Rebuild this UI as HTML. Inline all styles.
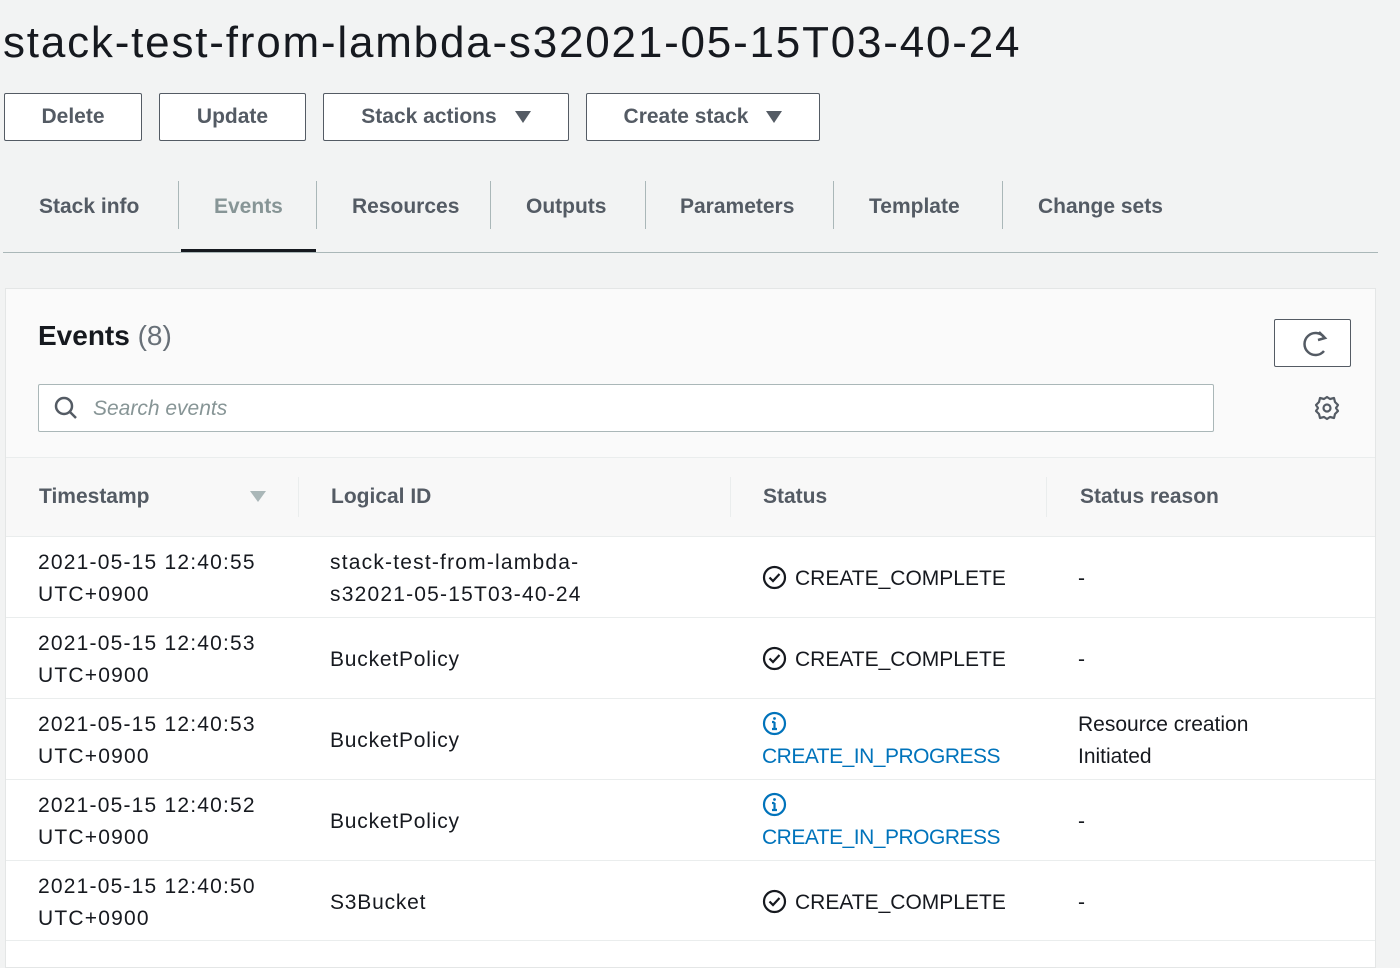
<!DOCTYPE html>
<html><head><meta charset="utf-8"><style>
*{margin:0;padding:0;box-sizing:border-box}
body{width:1400px;height:951px;overflow:hidden;background:#f2f3f3;font-family:"Liberation Sans",sans-serif;color:#16191f;position:relative}
.a{position:absolute;white-space:nowrap}
h1{position:absolute;left:3px;top:18px;font-size:44px;font-weight:400;color:#16191f;letter-spacing:1.8px}
.btn{position:absolute;top:93px;height:48px;border:1px solid #545b64;border-radius:2px;background:#fff;color:#545b64;font-weight:700;font-size:21px;display:flex;align-items:center;justify-content:center;gap:18px}
.tri{width:0;height:0;border-left:8px solid transparent;border-right:8px solid transparent;border-top:12px solid #545b64}
.tab{position:absolute;top:195px;font-size:21px;font-weight:700;color:#545b64}
.sep{position:absolute;top:181px;width:1px;height:48px;background:#aab7b8}
.panel{position:absolute;left:5px;top:288px;width:1371px;height:680px;background:#fff;border:1px solid #e4e6e6}
.cell{position:absolute;font-size:21px;line-height:32px;color:#16191f}
.ls{letter-spacing:1.2px}
.hd{position:absolute;top:485px;font-size:21px;font-weight:700;color:#545b64}
.line{position:absolute;left:6px;width:1369px;height:1px;background:#eaeded}
.blue{color:#0073bb}
</style></head><body>
<h1>stack-test-from-lambda-s32021-05-15T03-40-24</h1>
<div class="btn" style="left:4px;width:138px">Delete</div>
<div class="btn" style="left:159px;width:147px">Update</div>
<div class="btn" style="left:323px;width:246px">Stack actions <span class="tri"></span></div>
<div class="btn" style="left:586px;width:234px">Create stack <span class="tri"></span></div>
<div class="tab" style="left:39px">Stack info</div>
<div class="sep" style="left:178px"></div>
<div class="tab" style="left:214px;color:#879596">Events</div>
<div class="sep" style="left:316px"></div>
<div class="tab" style="left:352px">Resources</div>
<div class="sep" style="left:490px"></div>
<div class="tab" style="left:526px">Outputs</div>
<div class="sep" style="left:645px"></div>
<div class="tab" style="left:680px">Parameters</div>
<div class="sep" style="left:833px"></div>
<div class="tab" style="left:869px">Template</div>
<div class="sep" style="left:1002px"></div>
<div class="tab" style="left:1038px">Change sets</div>
<div class="a" style="left:181px;top:249px;width:135px;height:4px;background:#16191f"></div>
<div class="a" style="left:3px;top:252px;width:1375px;height:1px;background:#aab7b8"></div>

<div class="panel">
 <div class="a" style="left:0;top:0;width:1369px;height:168px;background:#fafafa"></div>
 <div class="a" style="left:0;top:168px;width:1369px;height:80px;background:#f8f8f8;border-top:1px solid #eaeded;border-bottom:1px solid #eaeded"></div>
</div>
<div class="a" style="left:38px;top:320px;font-size:28px;font-weight:700;color:#16191f">Events <span style="font-weight:400;color:#687078">(8)</span></div>
<div class="a" style="left:1274px;top:319px;width:77px;height:48px;border:1px solid #545b64;background:#fff;border-radius:2px">
 <svg width="77" height="48" viewBox="0 0 77 48"><path d="M49 17 A11 11 0 1 0 49 31" fill="none" stroke="#545b64" stroke-width="2.5"/><path d="M44 12 L50 18 L43 20" fill="none" stroke="#545b64" stroke-width="2.5"/></svg>
</div>
<div class="a" style="left:38px;top:384px;width:1176px;height:48px;border:1px solid #aab7b8;background:#fff;border-radius:2px"></div>
<svg class="a" style="left:53px;top:395px" width="26" height="26" viewBox="0 0 26 26"><circle cx="11" cy="11" r="8" fill="none" stroke="#545b64" stroke-width="2.5"/><path d="M17 17 L23 23" stroke="#545b64" stroke-width="2.5"/></svg>
<div class="a" style="left:93px;top:397px;font-size:21px;font-style:italic;color:#879596">Search events</div>
<svg class="a" style="left:1313px;top:394px" width="28" height="28" viewBox="0 0 28 28"><path d="M14 3 L17 5 L21 4 L22 8 L25 11 L23 14 L25 17 L22 20 L21 24 L17 23 L14 25 L11 23 L7 24 L6 20 L3 17 L5 14 L3 11 L6 8 L7 4 L11 5 Z" fill="none" stroke="#545b64" stroke-width="2.2" stroke-linejoin="round"/><circle cx="14" cy="14" r="3.5" fill="none" stroke="#545b64" stroke-width="2.2"/></svg>

<div class="hd" style="left:39px">Timestamp</div>
<div class="a" style="left:250px;top:491px;width:0;height:0;border-left:8px solid transparent;border-right:8px solid transparent;border-top:11px solid #aab7b8"></div>
<div class="a" style="left:298px;top:477px;width:1px;height:40px;background:#eaeded"></div>
<div class="hd" style="left:331px">Logical ID</div>
<div class="a" style="left:730px;top:477px;width:1px;height:40px;background:#eaeded"></div>
<div class="hd" style="left:763px">Status</div>
<div class="a" style="left:1046px;top:477px;width:1px;height:40px;background:#eaeded"></div>
<div class="hd" style="left:1080px">Status reason</div>

<div class="line" style="top:617px"></div>
<div class="line" style="top:698px"></div>
<div class="line" style="top:779px"></div>
<div class="line" style="top:860px"></div>
<div class="line" style="top:940px"></div>

<div class="cell ls" style="left:38px;top:547px">2021-05-15 12:40:55<br>UTC+0900</div>
<div class="cell ls" style="left:330px;top:547px">stack-test-from-lambda-<br>s32021-05-15T03-40-24</div>
<div class="cell" style="left:762px;top:563px"><svg width="25" height="25" viewBox="0 0 25 25" style="vertical-align:-5px;margin-right:8px"><circle cx="12.5" cy="12.5" r="10.5" fill="none" stroke="#16191f" stroke-width="2.2"/><path d="M7.5 12.5 L11 16 L17.5 9" fill="none" stroke="#16191f" stroke-width="2.2"/></svg>CREATE_COMPLETE</div>
<div class="cell" style="left:1078px;top:563px">-</div>

<div class="cell ls" style="left:38px;top:628px">2021-05-15 12:40:53<br>UTC+0900</div>
<div class="cell" style="left:330px;top:644px;letter-spacing:0.8px">BucketPolicy</div>
<div class="cell" style="left:762px;top:644px"><svg width="25" height="25" viewBox="0 0 25 25" style="vertical-align:-5px;margin-right:8px"><circle cx="12.5" cy="12.5" r="10.5" fill="none" stroke="#16191f" stroke-width="2.2"/><path d="M7.5 12.5 L11 16 L17.5 9" fill="none" stroke="#16191f" stroke-width="2.2"/></svg>CREATE_COMPLETE</div>
<div class="cell" style="left:1078px;top:644px">-</div>

<div class="cell ls" style="left:38px;top:709px">2021-05-15 12:40:53<br>UTC+0900</div>
<div class="cell" style="left:330px;top:725px;letter-spacing:0.8px">BucketPolicy</div>
<div class="cell blue" style="left:762px;top:709px;letter-spacing:-0.5px"><svg width="25" height="25" viewBox="0 0 25 25" style="vertical-align:-5px"><circle cx="12.5" cy="12.5" r="10.5" fill="none" stroke="#0073bb" stroke-width="2.2"/><path d="M12.5 11 V18 M10 18 H15 M10 11 H12.5" stroke="#0073bb" stroke-width="2.2" fill="none"/><circle cx="12.5" cy="7.5" r="1.4" fill="#0073bb"/></svg><br>CREATE_IN_PROGRESS</div>
<div class="cell" style="left:1078px;top:709px">Resource creation<br>Initiated</div>

<div class="cell ls" style="left:38px;top:790px">2021-05-15 12:40:52<br>UTC+0900</div>
<div class="cell" style="left:330px;top:806px;letter-spacing:0.8px">BucketPolicy</div>
<div class="cell blue" style="left:762px;top:790px;letter-spacing:-0.5px"><svg width="25" height="25" viewBox="0 0 25 25" style="vertical-align:-5px"><circle cx="12.5" cy="12.5" r="10.5" fill="none" stroke="#0073bb" stroke-width="2.2"/><path d="M12.5 11 V18 M10 18 H15 M10 11 H12.5" stroke="#0073bb" stroke-width="2.2" fill="none"/><circle cx="12.5" cy="7.5" r="1.4" fill="#0073bb"/></svg><br>CREATE_IN_PROGRESS</div>
<div class="cell" style="left:1078px;top:806px">-</div>

<div class="cell ls" style="left:38px;top:871px">2021-05-15 12:40:50<br>UTC+0900</div>
<div class="cell" style="left:330px;top:887px;letter-spacing:0.8px">S3Bucket</div>
<div class="cell" style="left:762px;top:887px"><svg width="25" height="25" viewBox="0 0 25 25" style="vertical-align:-5px;margin-right:8px"><circle cx="12.5" cy="12.5" r="10.5" fill="none" stroke="#16191f" stroke-width="2.2"/><path d="M7.5 12.5 L11 16 L17.5 9" fill="none" stroke="#16191f" stroke-width="2.2"/></svg>CREATE_COMPLETE</div>
<div class="cell" style="left:1078px;top:887px">-</div>
</body></html>
